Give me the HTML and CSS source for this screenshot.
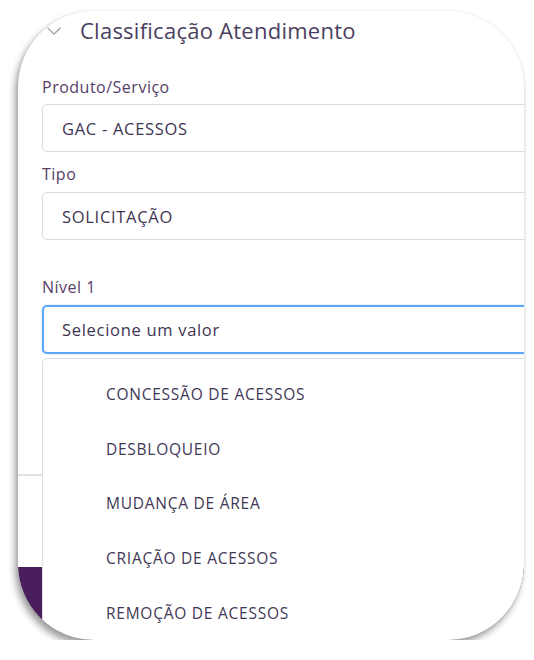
FILE: index.html
```html
<!DOCTYPE html>
<html lang="pt-BR">
<head>
<meta charset="utf-8">
<title>Classificação Atendimento</title>
<link rel="stylesheet" href="styles.css">
</head>
<body>
<div class="frame">
  <div class="panel">
    <div class="header">
      <svg class="chevron" width="14" height="8" viewBox="0 0 14 8"><polyline points="0.5,0.8 7,7 13.5,0.8" fill="none" stroke="#a3a3a3" stroke-width="1.3"/></svg>
      <span class="title">Classificação Atendimento</span>
    </div>
    <div class="content">
      <label class="label first">Produto/Serviço</label>
      <div class="field">GAC - ACESSOS</div>
      <label class="label second">Tipo</label>
      <div class="field">SOLICITAÇÃO</div>
      <label class="label third">Nível 1</label>
      <div class="select-wrap">
        <div class="field focused">Selecione um valor</div>
        <ul class="dropdown">
          <li>CONCESSÃO DE ACESSOS</li>
          <li>DESBLOQUEIO</li>
          <li>MUDANÇA DE ÁREA</li>
          <li>CRIAÇÃO DE ACESSOS</li>
          <li>REMOÇÃO DE ACESSOS</li>
        </ul>
      </div>
    </div>
  </div>
  <div class="divider"></div>
  <div class="footer"></div>
</div>
</body>
</html>
```
FILE: styles.css
```css
html, body {
  margin: 0;
  padding: 0;
  background: #ffffff;
}
body {
  font-family: "Open Sans", "Noto Sans", sans-serif;
}
.frame {
  position: relative;
  margin: 11px 0 0 18px;
  width: 506px;
  height: 629px;
  border-radius: 76px;
  overflow: hidden;
  background: #ffffff;
  box-shadow: -3px 5px 7px rgba(0, 0, 0, 0.38), 0 0 3px rgba(0, 0, 0, 0.08);
}
.panel {
  width: 600px;
}
.header {
  display: flex;
  align-items: center;
  height: 30px;
  margin-top: 4px;
  padding-left: 29px;
}
.chevron {
  display: block;
  margin-top: 1px;
}
.title {
  margin-left: 19px;
  font-size: 22px;
  letter-spacing: 0.25px;
  line-height: 30px;
  color: #4a3f5f;
}
.content {
  padding-left: 24px;
}
.label {
  display: block;
  font-size: 16px;
  letter-spacing: 0.5px;
  line-height: 20px;
  color: #553d68;
}
.label.first { margin-top: 32px; margin-bottom: 7px; }
.label.second { margin-top: 12px; margin-bottom: 8px; }
.label.third { margin-top: 37px; margin-bottom: 8px; }
.field {
  box-sizing: border-box;
  height: 48px;
  display: flex;
  align-items: center;
  padding-left: 19px;
  border: 1px solid #dcdcdc;
  border-radius: 5px;
  font-size: 16.5px;
  letter-spacing: 0.7px;
  color: #3e3552;
  background: #fff;
}
.field.focused {
  height: 49px;
  border: 2px solid #5aa8f7;
  padding-left: 18px;
  box-shadow: 0 0 2px rgba(90, 168, 247, 0.5);
}
.select-wrap {
  position: relative;
}
.dropdown {
  position: absolute;
  left: 0;
  right: 0;
  top: calc(100% + 4px);
  margin: 0;
  padding: 8px 0 0 0;
  list-style: none;
  background: #fff;
  border: 1px solid #dddddd;
  border-radius: 5px;
  z-index: 2;
}
.dropdown li {
  height: 54.6px;
  display: flex;
  align-items: center;
  padding-left: 63px;
  font-size: 15.5px;
  letter-spacing: 0.75px;
  color: #3f3756;
}
.divider {
  margin-top: 120px;
  height: 2px;
  background: #e2e2e2;
}
.footer {
  margin-top: 91px;
  height: 80px;
  background: #4a1d5c;
}
```
